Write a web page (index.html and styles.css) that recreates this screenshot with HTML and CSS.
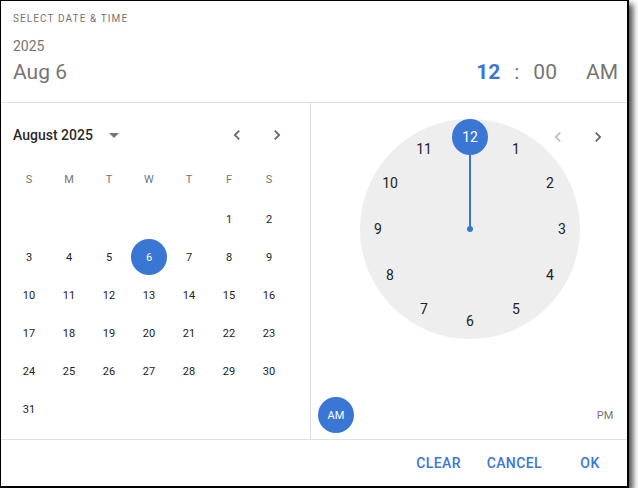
FILE: index.html
```html
<!DOCTYPE html>
<html lang="en">
<head>
  <meta charset="UTF-8">
  <title>Select date &amp; time</title>
  <link rel="stylesheet" href="styles.css">
</head>
<body>
  <div class="dialog">
    <header class="top">
      <div class="caption">SELECT DATE &amp; TIME</div>
      <div class="summary">
        <div class="date-sum">
          <div class="year">2025</div>
          <div class="day">Aug 6</div>
        </div>
        <div class="time-sum">
          <span class="t-hour">12</span><span class="t-sep">:</span><span class="t-min">00</span><span class="t-ampm">AM</span>
        </div>
      </div>
    </header>

    <main class="body">
      <section class="cal">
        <div class="cal-head">
          <span class="cal-month">August 2025</span>
          <svg class="caret" width="10" height="5" viewBox="0 0 10 5"><path d="M0 0h10L5 5z" fill="#757575"/></svg>
          <div class="nav">
            <button class="nav-btn"><svg width="20" height="20" viewBox="0 0 24 24"><path d="M15.41 7.41 14 6l-6 6 6 6 1.41-1.41L10.83 12z"/></svg></button>
            <button class="nav-btn"><svg width="20" height="20" viewBox="0 0 24 24"><path d="M10 6 8.59 7.41 13.17 12l-4.58 4.59L10 18l6-6z"/></svg></button>
          </div>
        </div>
        <div class="weekdays">
          <span>S</span><span>M</span><span>T</span><span>W</span><span>T</span><span>F</span><span>S</span>
        </div>
        <div class="days">
          <span></span><span></span><span></span><span></span><span></span>
          <span>1</span><span>2</span>
          <span>3</span><span>4</span><span>5</span><span class="sel">6</span><span>7</span><span>8</span><span>9</span>
          <span>10</span><span>11</span><span>12</span><span>13</span><span>14</span><span>15</span><span>16</span>
          <span>17</span><span>18</span><span>19</span><span>20</span><span>21</span><span>22</span><span>23</span>
          <span>24</span><span>25</span><span>26</span><span>27</span><span>28</span><span>29</span><span>30</span>
          <span>31</span>
        </div>
      </section>

      <section class="clock-pane">
        <div class="nav clock-nav">
          <button class="nav-btn off"><svg width="20" height="20" viewBox="0 0 24 24"><path d="M15.41 7.41 14 6l-6 6 6 6 1.41-1.41L10.83 12z"/></svg></button>
          <button class="nav-btn"><svg width="20" height="20" viewBox="0 0 24 24"><path d="M10 6 8.59 7.41 13.17 12l-4.58 4.59L10 18l6-6z"/></svg></button>
        </div>
        <div class="clock">
          <div class="hand"></div>
          <div class="pin"></div>
          <span class="num n12 on">12</span>
          <span class="num n1">1</span>
          <span class="num n2">2</span>
          <span class="num n3">3</span>
          <span class="num n4">4</span>
          <span class="num n5">5</span>
          <span class="num n6">6</span>
          <span class="num n7">7</span>
          <span class="num n8">8</span>
          <span class="num n9">9</span>
          <span class="num n10">10</span>
          <span class="num n11">11</span>
        </div>
        <div class="ampm">
          <span class="ap on">AM</span>
          <span class="ap">PM</span>
        </div>
      </section>
    </main>

    <footer class="actions">
      <button class="act">CLEAR</button>
      <button class="act">CANCEL</button>
      <button class="act">OK</button>
    </footer>
  </div>
</body>
</html>
```

FILE: styles.css
```css
body {
  margin: 0;
  padding: 0;
  background: #fff;
  font-family: Roboto, "Liberation Sans", sans-serif;
  color: rgba(0, 0, 0, 0.87);
}

.dialog {
  width: 626px;
  height: 485px;
  background: #fff;
  border: 1px solid #000;
  border-right-width: 2px;
  border-bottom-width: 2px;
  box-shadow: 4px 4px 6px rgba(0, 0, 0, 0.7);
  display: flex;
  flex-direction: column;
}

/* header */
.top {
  height: 102px;
  border-bottom: 1px solid #e0e0e0;
  padding: 12px 0 0 12px;
  box-sizing: border-box;
}

.caption {
  font-size: 10px;
  line-height: 12px;
  letter-spacing: 1.1px;
  color: #757575;
}

.summary {
  display: flex;
  justify-content: space-between;
  align-items: flex-end;
  margin-top: 13px;
}

.year {
  font-size: 14px;
  line-height: 16px;
  color: #757575;
}

.day {
  margin-top: 6px;
  font-size: 21px;
  line-height: 24px;
  color: #757575;
}

.time-sum {
  font-size: 21px;
  line-height: 24px;
  color: #757575;
  padding-right: 9px;
}

.t-hour {
  color: #3a77d4;
  font-weight: 700;
}

.t-sep {
  margin: 0 14px;
}

.t-ampm {
  margin-left: 29px;
}

/* body */
.body {
  display: flex;
  height: 336px;
  border-bottom: 1px solid #e0e0e0;
}

.cal {
  width: 301px;
  border-right: 1px solid #e0e0e0;
  padding-left: 8px;
}

.cal-head {
  display: flex;
  align-items: center;
  height: 40px;
  margin-top: 12px;
  padding-left: 4px;
  padding-right: 13px;
}

.cal-month {
  font-size: 14px;
  font-weight: 500;
}

.caret {
  margin-left: 16px;
}

.nav {
  display: flex;
  margin-left: auto;
}

.nav-btn {
  width: 40px;
  height: 40px;
  border: 0;
  padding: 0;
  background: none;
  display: flex;
  align-items: center;
  justify-content: center;
  fill: #616161;
}

.nav-btn.off {
  fill: #bdbdbd;
}

.weekdays,
.days {
  display: grid;
  grid-template-columns: repeat(7, 40px);
}

.weekdays {
  margin-top: 4px;
  grid-auto-rows: 40px;
}

.weekdays span {
  display: flex;
  align-items: center;
  justify-content: center;
  font-size: 11px;
  color: #757575;
}

.days {
  margin-top: 1px;
  grid-auto-rows: 38px;
}

.days span {
  display: flex;
  align-items: center;
  justify-content: center;
  font-size: 11px;
  color: #222;
}

.days .sel {
  width: 36px;
  height: 36px;
  margin: 1px auto;
  border-radius: 50%;
  background: #3a77d4;
  color: #fff;
}

/* clock */
.clock-pane {
  flex: 1;
  position: relative;
  display: flex;
  flex-direction: column;
}

.clock-nav {
  position: absolute;
  top: 14px;
  right: 9px;
}

.clock {
  position: relative;
  width: 220px;
  height: 220px;
  margin: 16px 0 0 49px;
  border-radius: 50%;
  background: #eeeeee;
}

.hand {
  position: absolute;
  left: 109px;
  top: 36px;
  width: 2px;
  height: 74px;
  background: #3a77d4;
}

.pin {
  position: absolute;
  left: 107px;
  top: 107px;
  width: 6px;
  height: 6px;
  border-radius: 50%;
  background: #3a77d4;
}

.num {
  position: absolute;
  width: 36px;
  height: 36px;
  margin: -18px 0 0 -18px;
  display: flex;
  align-items: center;
  justify-content: center;
  font-size: 14px;
  color: #222;
}

.num.on {
  background: #3a77d4;
  color: #fff;
  border-radius: 50%;
}

.n12 { left: 110px; top: 18px; }
.n1  { left: 156px; top: 30px; }
.n2  { left: 190px; top: 64px; }
.n3  { left: 202px; top: 110px; }
.n4  { left: 190px; top: 156px; }
.n5  { left: 156px; top: 190px; }
.n6  { left: 110px; top: 202px; }
.n7  { left: 64px;  top: 190px; }
.n8  { left: 30px;  top: 156px; }
.n9  { left: 18px;  top: 110px; }
.n10 { left: 30px;  top: 64px; }
.n11 { left: 64px;  top: 30px; }

.ampm {
  margin-top: auto;
  display: flex;
  justify-content: space-between;
  padding: 0 4px 6px 7px;
}

.ap {
  width: 36px;
  height: 36px;
  border-radius: 50%;
  display: flex;
  align-items: center;
  justify-content: center;
  font-size: 11px;
  color: #757575;
}

.ap.on {
  background: #3a77d4;
  color: #fff;
}

/* footer */
.actions {
  flex: 1;
  display: flex;
  justify-content: flex-end;
  align-items: center;
  gap: 8px;
  padding-right: 5px;
}

.act {
  min-width: 64px;
  height: 36px;
  padding: 6px 8px;
  border: 0;
  background: none;
  font-family: Roboto, "Liberation Sans", sans-serif;
  font-size: 14px;
  font-weight: 500;
  letter-spacing: 0.4px;
  color: #3a77d4;
}
```
